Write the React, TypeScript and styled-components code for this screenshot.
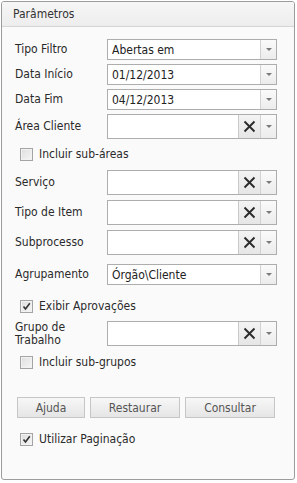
import React from "react";
import styled, { createGlobalStyle } from "styled-components";

const Global = createGlobalStyle`
  html, body { margin: 0; padding: 0; background: #ffffff; }
  body { font-family: "DejaVu Sans Condensed", "DejaVu Sans", Verdana, sans-serif; font-size: 12px; color: #2a2a2a; }
`;

const Panel = styled.div`
  margin: 1px 0 0 1px;
  width: 294px;
  height: 479px;
  box-sizing: border-box;
  border: 1px solid #9c9c9c;
  border-radius: 3px;
  background: #fafafa;
  overflow: hidden;
  display: flex;
  flex-direction: column;
`;

const Header = styled.div`
  height: 25px;
  box-sizing: border-box;
  border-bottom: 1px solid #d4d4d4;
  background: linear-gradient(#f6f6f6, #ededed);
  display: flex;
  align-items: center;
  padding-left: 11px;
  color: #333;
`;

const Body = styled.div`
  padding: 12px 0 0 13px;
  display: flex;
  flex-direction: column;
`;

const Row = styled.div<{ $mt: number; $h: number }>`
  margin-top: ${(p) => p.$mt}px;
  height: ${(p) => p.$h}px;
  display: flex;
  align-items: center;
`;

const Label = styled.div`
  width: 92px;
  line-height: 13px;
  color: #2a2a2a;
`;

const Field = styled.div`
  width: 170px;
  height: 100%;
  box-sizing: border-box;
  border: 1px solid #adadad;
  background: #fff;
  display: flex;
`;

const Value = styled.div`
  flex: 1;
  padding-left: 4px;
  display: flex;
  align-items: center;
  color: #222;
  overflow: hidden;
  white-space: nowrap;
`;

const DropBtn = styled.div`
  width: 15px;
  border-left: 1px solid #d2d2d2;
  background: linear-gradient(#fafafa, #ececec);
  display: flex;
  align-items: center;
  justify-content: center;
`;

const ClearBtn = styled.div`
  width: 21px;
  border-left: 1px solid #c9c9c9;
  background: linear-gradient(#f3f3f3, #e6e6e6);
  display: flex;
  align-items: center;
  justify-content: center;
`;

const Arrow = styled.div`
  width: 0;
  height: 0;
  border-left: 3px solid transparent;
  border-right: 3px solid transparent;
  border-top: 3px solid #7a7a7a;
`;

const CheckRow = styled.div<{ $mt: number }>`
  margin-top: ${(p) => p.$mt}px;
  height: 22px;
  padding-left: 5px;
  display: flex;
  align-items: center;
  gap: 6px;
  color: #2a2a2a;
`;

const Box = styled.div`
  width: 13px;
  height: 13px;
  box-sizing: border-box;
  border: 1px solid #a4a4a4;
  background: linear-gradient(135deg, #dedede, #f6f6f6);
  box-shadow: inset 0 0 0 1px #f2f2f2;
  display: flex;
  align-items: center;
  justify-content: center;
`;

const Buttons = styled.div`
  margin: 24px 0 0 2px;
  height: 21px;
  display: flex;
  gap: 5px;
`;

const Button = styled.div<{ $w: number }>`
  width: ${(p) => p.$w}px;
  height: 100%;
  box-sizing: border-box;
  border: 1px solid #c6c6c6;
  background: linear-gradient(#f7f7f7, #e5e5e5);
  color: #555;
  display: flex;
  align-items: center;
  justify-content: center;
`;

const Drop = () => (
  <DropBtn>
    <Arrow />
  </DropBtn>
);

const XIcon = () => (
  <svg width="13" height="13" viewBox="0 0 13 13">
    <path d="M1.5 1.5 L11.5 11.5 M11.5 1.5 L1.5 11.5" stroke="#2b2b2b" strokeWidth="1.9" fill="none" />
  </svg>
);

const Check = ({ checked }: { checked?: boolean }) => (
  <Box>
    {checked && (
      <svg width="9" height="9" viewBox="0 0 9 9">
        <path d="M1.5 4.5 L3.5 7 L7.8 1.2" stroke="#333" strokeWidth="1.6" fill="none" />
      </svg>
    )}
  </Box>
);

const SelectRow = ({ label, value, mt }: { label: string; value: string; mt: number }) => (
  <Row $mt={mt} $h={21}>
    <Label>{label}</Label>
    <Field>
      <Value>{value}</Value>
      <Drop />
    </Field>
  </Row>
);

const ComboRow = ({ label, mt }: { label: React.ReactNode; mt: number }) => (
  <Row $mt={mt} $h={25}>
    <Label>{label}</Label>
    <Field>
      <Value />
      <ClearBtn>
        <XIcon />
      </ClearBtn>
      <Drop />
    </Field>
  </Row>
);

export default function App() {
  return (
    <>
      <Global />
      <Panel>
        <Header>Parâmetros</Header>
        <Body>
          <SelectRow label="Tipo Filtro" value="Abertas em" mt={0} />
          <SelectRow label="Data Início" value="01/12/2013" mt={4} />
          <SelectRow label="Data Fim" value="04/12/2013" mt={4} />
          <ComboRow label="Área Cliente" mt={4} />
          <CheckRow $mt={4}>
            <Check />
            Incluir sub-áreas
          </CheckRow>
          <ComboRow label="Serviço" mt={5} />
          <ComboRow label="Tipo de Item" mt={5} />
          <ComboRow label="Subprocesso" mt={5} />
          <SelectRow label="Agrupamento" value="Órgão\Cliente" mt={9} />
          <CheckRow $mt={10}>
            <Check checked />
            Exibir Aprovações
          </CheckRow>
          <ComboRow label={<>Grupo de<br />Trabalho</>} mt={4} />
          <CheckRow $mt={5}>
            <Check />
            Incluir sub-grupos
          </CheckRow>
          <Buttons>
            <Button $w={68}>Ajuda</Button>
            <Button $w={90}>Restaurar</Button>
            <Button $w={90}>Consultar</Button>
          </Buttons>
          <CheckRow $mt={10}>
            <Check checked />
            Utilizar Paginação
          </CheckRow>
        </Body>
      </Panel>
    </>
  );
}
